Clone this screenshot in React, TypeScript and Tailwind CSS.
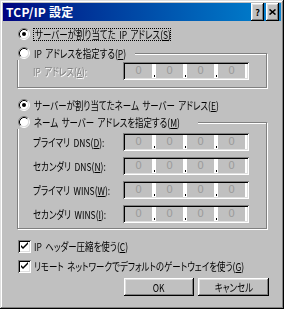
import React from "react";

const FONT = "[font-family:'Noto_Sans_CJK_JP','Noto_Sans',sans-serif] [font-feature-settings:'palt']";

function T({ children, center }: { children: React.ReactNode; center?: boolean }) {
  return (
    <span
      className={`inline-block whitespace-nowrap scale-x-[0.77] [word-spacing:2px] ${center ? "origin-center" : "origin-left"}`}
    >
      {children}
    </span>
  );
}

function Radio({ checked }: { checked?: boolean }) {
  return (
    <svg width="12" height="12" viewBox="0 0 12 12" className="shrink-0">
      <circle cx="6" cy="6" r="4.5" fill="#fff" />
      <path d="M2.11 9.89 A5.5 5.5 0 0 1 9.89 2.11" fill="none" stroke="#808080" strokeWidth="1" />
      <path d="M9.89 2.11 A5.5 5.5 0 0 1 2.11 9.89" fill="none" stroke="#ffffff" strokeWidth="1" />
      <path d="M2.82 9.18 A4.5 4.5 0 0 1 9.18 2.82" fill="none" stroke="#000" strokeWidth="1" />
      <path d="M9.18 2.82 A4.5 4.5 0 0 1 2.82 9.18" fill="none" stroke="#dfdfdf" strokeWidth="1" />
      {checked && <circle cx="6" cy="6" r="2" fill="#000" />}
    </svg>
  );
}

function Check() {
  return (
    <div className="relative w-[13px] h-[13px] shrink-0 bg-white shadow-[inset_1px_1px_#808080,inset_-1px_-1px_#fff,inset_2px_2px_#000,inset_-2px_-2px_#dfdfdf]">
      <svg width="13" height="13" viewBox="0 0 13 13" className="absolute left-0 top-0">
        <path d="M3 5 L3 7 L5 9 L10 4 L10 2 L5 7 Z" fill="#000" />
      </svg>
    </div>
  );
}

function IpField() {
  const seg = (k: number) => (
    <div
      key={"s" + k}
      className="w-[27px] h-full bg-[#c0c0c0] flex items-center justify-center pb-[1px] text-[11px] leading-none text-[#9a9a9a] [text-shadow:none] [font-family:'Liberation_Sans',sans-serif]"
    >
      0
    </div>
  );
  const sep = (k: number) => (
    <div key={"d" + k} className="w-[4px] h-full flex items-end justify-center pb-[1px]">
      <span className="block w-[1px] h-[2px] bg-black" />
    </div>
  );
  return (
    <div className="w-[126px] h-[18px] shrink-0 bg-white p-[2px] flex shadow-[inset_1px_1px_#808080,inset_-1px_-1px_#fff,inset_2px_2px_#000,inset_-2px_-2px_#dfdfdf]">
      {seg(0)}
      {sep(0)}
      {seg(1)}
      {sep(1)}
      {seg(2)}
      {sep(2)}
      {seg(3)}
      <div className="w-[2px]" />
    </div>
  );
}

function U({ c }: { c: string }) {
  return <span className="underline underline-offset-[1px]">{c}</span>;
}

const btn =
  "h-[18px] bg-[#c0c0c0] flex items-center justify-center shadow-[inset_-1px_-1px_#000,inset_1px_1px_#fff,inset_-2px_-2px_#808080,inset_2px_2px_#dfdfdf]";

function Row({ label, m }: { label: string; m: string }) {
  return (
    <div className="flex items-center h-[18px]">
      <div className="w-[105px] pl-[15px] whitespace-nowrap">
        <T>
          {label}(<U c={m} />):
        </T>
      </div>
      <IpField />
    </div>
  );
}

export default function App() {
  return (
    <div
      className={`w-[284px] h-[309px] bg-[#c0c0c0] p-[3px] flex flex-col text-[11px] leading-[14px] text-black ${FONT} shadow-[inset_-1px_-1px_#000,inset_1px_1px_#dfdfdf,inset_-2px_-2px_#808080,inset_2px_2px_#fff]`}
    >
      {/* title bar */}
      <div className="h-[18px] flex items-center bg-gradient-to-r from-[#000080] to-[#1084d0] pl-[3px] pr-[2px]">
        <span className="text-white font-bold text-[12px] tracking-[0.2px]">TCP/IP 設定</span>
        <div className="ml-auto flex gap-[2px]">
          <div className={`w-[13px] h-[11px] ${btn} text-[9px] font-bold leading-none`}>?</div>
          <div className={`w-[13px] h-[11px] ${btn}`}>
            <svg width="7" height="6" viewBox="0 0 7 6">
              <path d="M0.5 0.5 L6.5 5.5 M6.5 0.5 L0.5 5.5" stroke="#000" strokeWidth="1.6" />
            </svg>
          </div>
        </div>
      </div>

      <div className="flex flex-col px-[14px]">
        {/* radio 1 */}
        <div className="mt-[6px] h-[14px] flex items-center pl-[1px] gap-[3px]">
          <Radio checked />
          <span className="w-[138px] h-[13px] flex items-center border border-dotted border-black pl-[1px] overflow-visible">
            <T>
              サーバーが割り当てた IP アドレス(<U c="S" />)
            </T>
          </span>
        </div>

        {/* group 1 */}
        <div className="relative mt-[12px] h-[35px] border border-[#808080] shadow-[1px_1px_0_#fff,inset_1px_1px_0_#fff]">
          <div className="absolute -left-[1px] -top-[8px] w-[118px] h-[14px] flex items-center gap-[4px] bg-[#c0c0c0] pl-[1px]">
            <Radio />
            <T>
              IP アドレスを指定する(<U c="P" />)
            </T>
          </div>
          <div className="mt-[8px] flex items-center h-[18px]">
            <div className="w-[105px] pl-[15px] whitespace-nowrap text-[#808080] [text-shadow:1px_1px_0_#ffffff]">
              <T>
                IP アドレス(<U c="A" />):
              </T>
            </div>
            <IpField />
          </div>
        </div>

        {/* radio 3 */}
        <div className="mt-[10px] h-[14px] flex items-center pl-[1px] gap-[4px]">
          <Radio checked />
          <T>
            サーバーが割り当てたネーム サーバー アドレス(<U c="E" />)
          </T>
        </div>

        {/* group 2 */}
        <div className="relative mt-[10px] h-[107px] border border-[#808080] shadow-[1px_1px_0_#fff,inset_1px_1px_0_#fff] flex flex-col gap-[6px] pt-[10px]">
          <div className="absolute -left-[1px] -top-[8px] w-[181px] h-[14px] flex items-center gap-[4px] bg-[#c0c0c0] pl-[1px]">
            <Radio />
            <T>
              ネーム サーバー アドレスを指定する(<U c="M" />)
            </T>
          </div>
          <Row label="プライマリ DNS" m="D" />
          <Row label="セカンダリ DNS" m="N" />
          <Row label="プライマリ WINS" m="W" />
          <Row label="セカンダリ WINS" m="I" />
        </div>

        {/* checkboxes */}
        <div className="mt-[10px] h-[14px] flex items-center pl-[1px] gap-[3px]">
          <Check />
          <T>
            IP ヘッダー圧縮を使う(<U c="C" />)
          </T>
        </div>
        <div className="mt-[6px] h-[14px] flex items-center pl-[1px] gap-[3px]">
          <Check />
          <T>
            リモート ネットワークでデフォルトのゲートウェイを使う(<U c="G" />)
          </T>
        </div>

        {/* buttons */}
        <div className="mt-[5px] flex justify-end gap-[4px] -mr-[2px]">
          <div className={`w-[70px] ${btn}`}>
            <T center>OK</T>
          </div>
          <div className={`w-[71px] ${btn}`}>
            <T center>キャンセル</T>
          </div>
        </div>
      </div>
    </div>
  );
}
